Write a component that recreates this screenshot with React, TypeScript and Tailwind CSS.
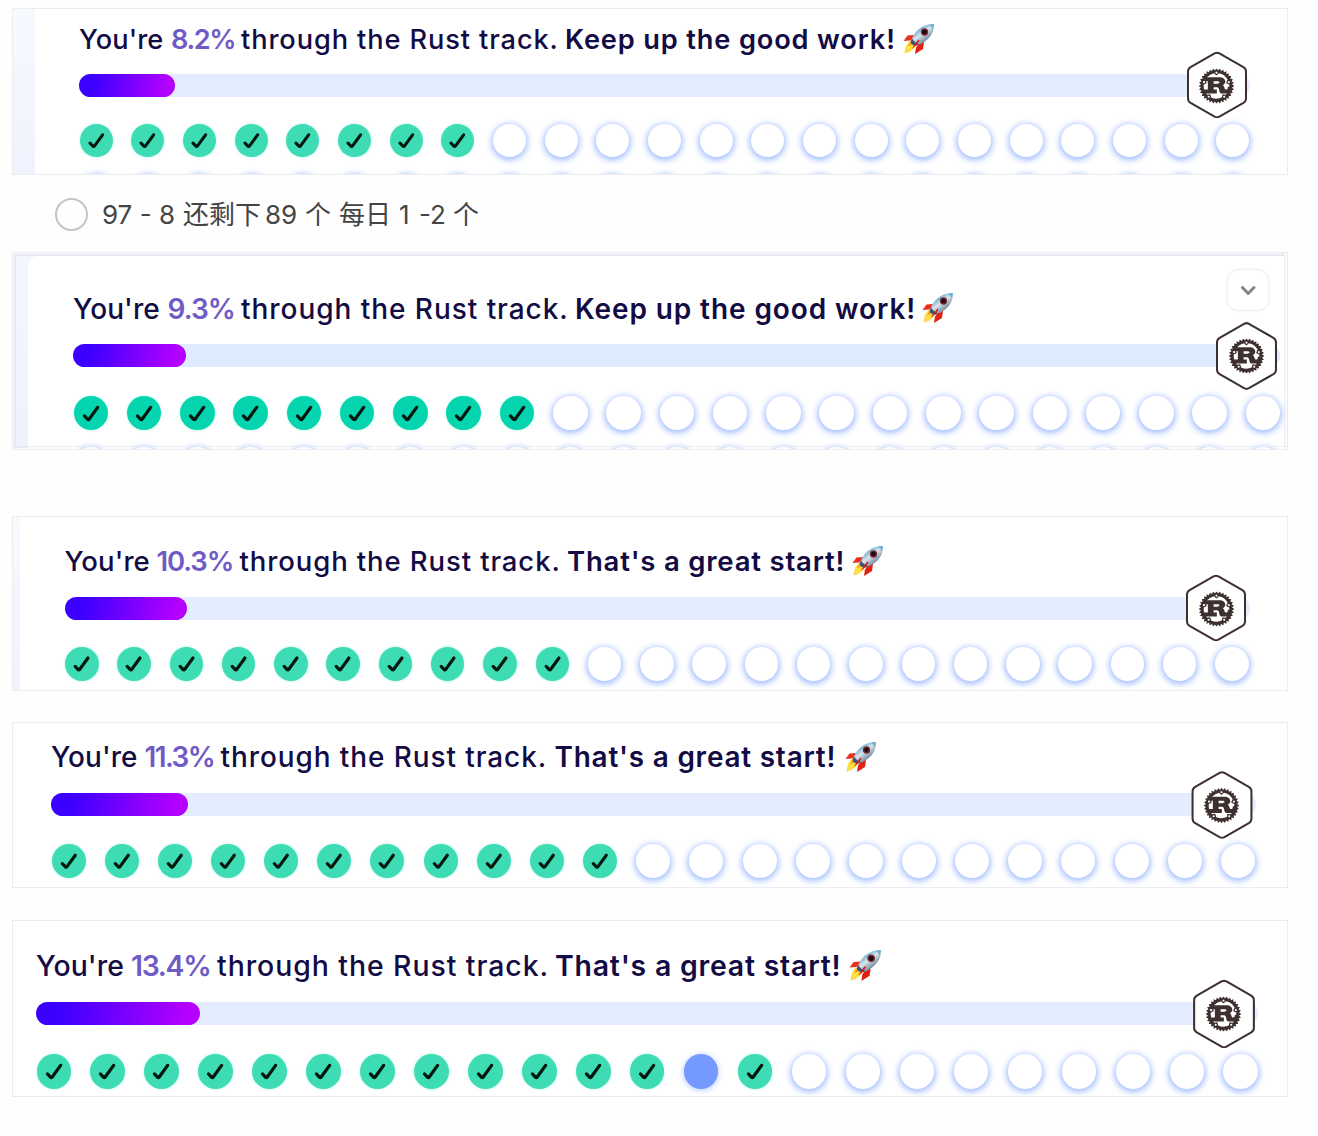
import React from "react";
import { SiRust } from "react-icons/si";

type Panel = {
  percent: string;
  cheer: string;
  done: number;
  current?: number;
  nextRow?: string;
  frame: string;
  edge?: string;
  text: string;
  you: string;
  pct: string;
  through: string;
  cheerBox: string;
  rocket: string;
  track: string;
  fill: string;
  hex: string;
  dots: string;
  dot: string;
  doneColor: string;
  collapsible?: boolean;
};

const panels: Panel[] = [
  {
    percent: "8.2%", cheer: "Keep up the good work!", done: 8,
    nextRow: "mt-[17px] w-[1171px]",
    frame: "mt-2 h-[167px] pl-[66px]",
    edge: "w-[22px]",
    text: "mt-[11px] h-[40px] text-[27.2px]",
    you: "w-[92px] tracking-[0.1px]", pct: "w-[70px] tracking-[-1.4px]", through: "w-[324px] tracking-[0.9px]",
    cheerBox: "w-[338px] tracking-[0.85px]", rocket: "size-[32px]",
    track: "mt-[14px] h-[22.5px] w-[1170.5px] bg-[#e4edff]", fill: "w-[96px]",
    hex: "right-[3px] h-[67px] w-[60px]",
    dots: "mt-[27.5px] h-[33px] w-[1171px]", dot: "size-[33px]", doneColor: "bg-[#3edcb5]",
  },
  {
    percent: "9.3%", cheer: "Keep up the good work!", done: 9,
    nextRow: "mt-[17px] w-[1208px]",
    frame: "h-[198px] pl-[60px]",
    text: "mt-[36px] h-[40px] text-[28px]",
    you: "w-[94.5px] tracking-[0.1px]", pct: "w-[73.5px] tracking-[-1px]", through: "w-[334px] tracking-[0.95px]",
    cheerBox: "w-[347px] tracking-[0.9px]", rocket: "size-[32px]",
    track: "mt-[15px] h-[23px] w-[1207px] bg-[#deeaff]", fill: "w-[113px]",
    hex: "right-[3px] h-[69px] w-[61px]",
    dots: "mt-[28.5px] h-[34.5px] w-[1208px]", dot: "size-[34.5px]", doneColor: "bg-[#04d5ae]",
    collapsible: true,
  },
  {
    percent: "10.3%", cheer: "That's a great start!", done: 10,
    frame: "mt-[66px] h-[175px] pl-[51.5px]",
    edge: "w-[7px]",
    text: "mt-[25px] h-[40px] text-[27.5px]",
    you: "w-[92px] tracking-[0.1px]", pct: "w-[83px] tracking-[-1.1px]", through: "w-[327.5px] tracking-[0.9px]",
    cheerBox: "w-[284.5px] tracking-[0.8px]", rocket: "size-[32px]",
    track: "mt-[15px] h-[22.5px] w-[1185px] bg-[#e4edff]", fill: "w-[122.5px]",
    hex: "right-[3.5px] h-[67px] w-[60px]",
    dots: "mt-[27.5px] h-[34px] w-[1185px]", dot: "size-[33.5px]", doneColor: "bg-[#3edcb5]",
  },
  {
    percent: "11.3%", cheer: "That's a great start!", done: 11,
    frame: "mt-[31px] h-[166px] pl-[38px]",
    text: "mt-[15px] h-[40px] text-[27.9px]",
    you: "w-[93.5px] tracking-[0.1px]", pct: "w-[76px] tracking-[-1.6px]", through: "w-[334px] tracking-[0.95px]",
    cheerBox: "w-[290px] tracking-[0.8px]", rocket: "size-[32px]",
    track: "mt-[15px] h-[23px] w-[1205px] bg-[#e4edff]", fill: "w-[137px]",
    hex: "right-[3.5px] h-[68px] w-[62px]",
    dots: "mt-[28px] h-[34px] w-[1204.5px]", dot: "size-[34px]", doneColor: "bg-[#3edcb5]",
  },
  {
    percent: "13.4%", cheer: "That's a great start!", done: 14, current: 12,
    frame: "mt-[32px] h-[177px] pl-[23px]",
    text: "mt-[25px] h-[40px] text-[28.4px]",
    you: "w-[95px] tracking-[0.1px]", pct: "w-[86px] tracking-[-1.3px]", through: "w-[338px] tracking-[0.95px]",
    cheerBox: "w-[294px] tracking-[0.8px]", rocket: "size-[33px]",
    track: "mt-[16px] h-[23px] w-[1222px] bg-[#e4edff]", fill: "w-[163.5px]",
    hex: "right-[3.5px] h-[69px] w-[62px]",
    dots: "mt-[29px] h-[34.5px] w-[1222.5px]", dot: "size-[34.5px]", doneColor: "bg-[#3edcb5]",
  },
];

const COLUMNS = Array.from({ length: 23 }, (_, i) => i);

function Rocket({ className }: { className: string }) {
  return (
    <svg viewBox="0 0 64 64" className={`relative -top-px shrink-0 ${className}`}>
      <defs>
        <linearGradient id="hull" x1="0.25" y1="0.2" x2="0.75" y2="0.8">
          <stop offset="0" stopColor="#4e9fc6" />
          <stop offset="0.45" stopColor="#d9e4ea" />
          <stop offset="1" stopColor="#5f7890" />
        </linearGradient>
        <linearGradient id="flame" x1="1" y1="0" x2="0" y2="1">
          <stop offset="0" stopColor="#f6a800" />
          <stop offset="0.5" stopColor="#ffe23a" />
          <stop offset="1" stopColor="#f9d66a" />
        </linearGradient>
      </defs>
      <path d="M22 24 9 25 1 36l13-1 8-4z" fill="#e8301c" />
      <path d="M42 38 40 52 24 62l2-13 8-11z" fill="#e32112" />
      <path d="M16 35C7 40 4 49 3 61c8-1 18-6 22-16z" fill="url(#flame)" />
      <path d="m17 36-7 11 9-6z" fill="#ef7d16" />
      <path d="M62 2C45 2 27 10 18 31c-1 3-3 6-3 8 1 4 5 6 8 6 3 0 7-1 10-2C52 34 63 20 62 2z" fill="url(#hull)" />
      <path d="M62 2c-4 0-8 .5-12 2 5 1 8 4 9 9 2-4 3-7 3-11z" fill="#69aed3" />
      <path d="M18 31c3 5 8 10 15 12l-7 2c-6 0-10-3-11-7z" fill="#3b5275" />
      <circle cx="43" cy="18" r="7.3" fill="#7a2530" />
      <circle cx="43" cy="18" r="4.6" fill="#170e19" />
      <path d="m31 33-8 10-5 9 10-9 5-8z" fill="#c81f1a" />
    </svg>
  );
}

function Check() {
  return (
    <svg viewBox="0 0 34 34" className="size-full" fill="none" stroke="#03170f" strokeWidth="3.2" strokeLinecap="round" strokeLinejoin="round">
      <path d="M10.3 19.7 13.7 23.2Q14.4 23.4 15 22.6L23.3 11.2" />
    </svg>
  );
}

function TrackBadge({ className }: { className: string }) {
  return (
    <div className={`absolute top-1/2 flex -translate-y-1/2 items-center justify-center ${className}`}>
      <svg viewBox="0 0 60 67" className="absolute inset-0 size-full" fill="#fff" stroke="#3d302f" strokeWidth="2">
        <path d="M27.6 1.8Q30 .5 32.4 1.8L56.4 15.6Q59 17.2 59 20V47Q59 49.8 56.4 51.4L32.4 65.2Q30 66.5 27.6 65.2L3.6 51.4Q1 49.8 1 47V20Q1 17.2 3.6 15.6Z" />
      </svg>
      <SiRust className="relative top-[0.5px] size-[35px] text-[#3d302f]" />
    </div>
  );
}

function Dots({ panel, upcoming = false }: { panel: Panel; upcoming?: boolean }) {
  return (
    <div className={`flex shrink-0 items-center justify-between px-[0.5px] ${upcoming ? panel.nextRow : panel.dots}`}>
      {COLUMNS.map((i) => {
        const current = !upcoming && i === panel.current;
        const done = !upcoming && !current && i < panel.done;
        const look = done
          ? `${panel.doneColor} shadow-[0_0_3px_#b5f5e4]`
          : current
            ? "bg-[#749aff] shadow-[0_1px_6px_#b0c6ff]"
            : "bg-white shadow-[0_1.5px_6px_1.5px_#9fbcff]";
        return (
          <div key={i} className={`shrink-0 rounded-full ${panel.dot} ${look}`}>
            {done && <Check />}
          </div>
        );
      })}
    </div>
  );
}

function ProgressPanel({ panel }: { panel: Panel }) {
  return (
    <section className={`relative flex shrink-0 flex-col overflow-hidden border border-[#ebecef] bg-white ${panel.frame}`}>
      {panel.edge && <div className={`absolute inset-y-0 left-0 bg-linear-to-b from-[#f7f9ff] to-[#eef3fd] ${panel.edge}`} />}
      {panel.collapsible && (
        <>
          <div className="absolute inset-0 bg-[#f7f8fc]" />
          <div className="absolute inset-[1px] border-2 border-[#e5e9f3] bg-linear-to-b from-[#f4f7fe] to-[#edf2fd]" />
          <div className="absolute top-[3px] right-[3px] bottom-0 left-[15px] rounded-tl-[10px] bg-white" />
          <div className="absolute inset-y-0 right-0 w-[3px] border-l border-[#eeeff3] bg-[#fafafc]" />
          <button className="absolute top-[17px] right-[19px] flex size-10 items-center justify-center rounded-[10px] bg-white shadow-[0_0_3px_#d8d8d8]">
            <svg viewBox="0 0 20 20" className="size-5" fill="none" stroke="#858585" strokeWidth="3" strokeLinecap="round" strokeLinejoin="round">
              <path d="m4.4 7.5 5.8 6 5.8-6" />
            </svg>
          </button>
        </>
      )}
      <h2 className={`relative flex shrink-0 items-center font-[450] whitespace-nowrap text-[#130b43] ${panel.text}`}>
        <span className={`shrink-0 ${panel.you}`}>You're</span>
        <span className={`shrink-0 font-semibold text-[#705bc6] ${panel.pct}`}>{panel.percent}</span>
        <span className={`shrink-0 ${panel.through}`}>through the Rust track.</span>
        <strong className={`shrink-0 font-semibold ${panel.cheerBox}`}>{panel.cheer}</strong>
        <Rocket className={panel.rocket} />
      </h2>
      <div className={`relative z-10 shrink-0 rounded-full ${panel.track}`}>
        <div className={`h-full rounded-full bg-linear-[100deg] from-[#3b00ff] from-15% to-[#b300ff] to-90% ${panel.fill}`} />
        <TrackBadge className={panel.hex} />
      </div>
      <div className="relative">
        <Dots panel={panel} />
        {panel.nextRow && <Dots panel={panel} upcoming />}
      </div>
      {panel.collapsible && <div className="absolute right-0 bottom-0 left-0 h-[3px] border-t border-[#e9eaf0]/80" />}
    </section>
  );
}

function TaskNote() {
  return (
    <div className="flex h-[77px] shrink-0 items-center pt-[2px] pl-[43px] font-['Inter','Noto_Sans_CJK_SC',sans-serif] text-[26px] whitespace-nowrap text-[#444]">
      <span className="mr-[14px] size-[33px] shrink-0 rounded-full border-2 border-[#c4c4c4]" />
      <span className="w-[81px]">97 - 8</span>
      <span className="w-[82px]">还剩下</span>
      <span className="w-[40px]">89</span>
      <span className="w-[34px]">个</span>
      <span className="w-[60px]">每日</span>
      <span className="w-[20px]">1</span>
      <span className="w-[34px]">-2</span>
      <span>个</span>
    </div>
  );
}

export default function App() {
  return (
    <main className="flex h-[1136px] w-[1318px] flex-col overflow-hidden bg-[#fefefe] pr-[30px] pl-3 font-['Inter',sans-serif]">
      <ProgressPanel panel={panels[0]} />
      <TaskNote />
      {panels.slice(1).map((panel) => (
        <ProgressPanel key={panel.percent} panel={panel} />
      ))}
    </main>
  );
}
